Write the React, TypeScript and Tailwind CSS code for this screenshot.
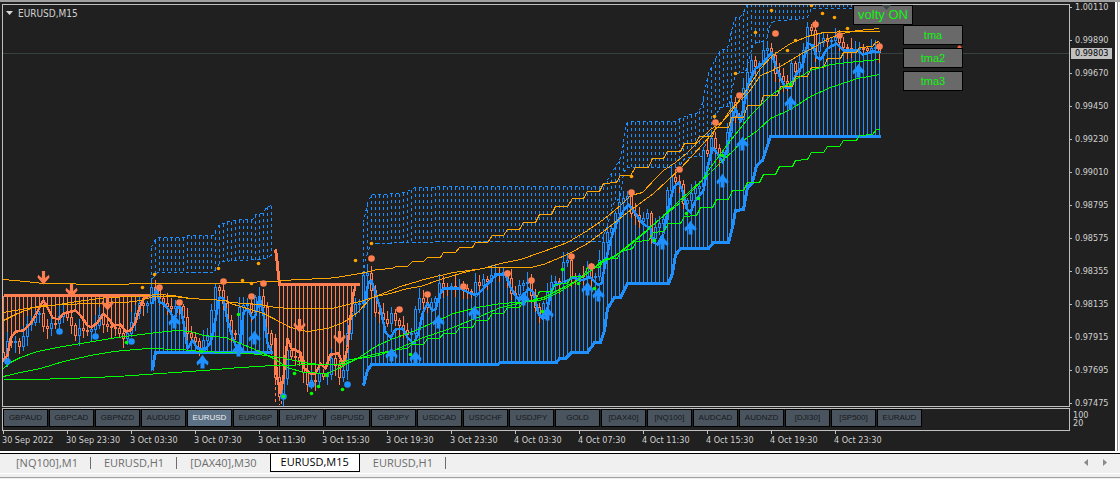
import { useState } from 'react';
import clsx from 'clsx';

type Point = [number, number];

const BLUE = '#1e90ff';
const CORAL = '#ff7f50';
const ORANGE = '#ffa500';
const LIME = '#00ff00';
const BACKGROUND = '#202020';

const parse = (text: string): Point[] =>
  text.trim().split(/\s+/).map((pair) => pair.split(',').map(Number) as Point);

const yAt = (points: Point[], x: number) => {
  if (x <= points[0][0]) return points[0][1];
  for (let i = 1; i < points.length; i++) {
    const [x0, y0] = points[i - 1];
    const [x1, y1] = points[i];
    if (x <= x1) return Math.round(y0 + ((y1 - y0) * (x - x0)) / (x1 - x0 || 1));
  }
  return points[points.length - 1][1];
};

const barsBetween = (from: number, to: number) => {
  const xs: number[] = [];
  for (let x = from; x <= to; x += 4) xs.push(x);
  return xs;
};

const SYMBOLS = [
  'GBPAUD', 'GBPCAD', 'GBPNZD', 'AUDUSD', 'EURUSD', 'EURGBP', 'EURJPY', 'GBPUSD', 'GBPJPY', 'USDCAD',
  'USDCHF', 'USDJPY', 'GOLD', '[DAX40]', '[NQ100]', 'AUDCAD', 'AUDNZD', '[DJI30]', '[SP500]', 'EURAUD',
];

const PRICES = [
  '1.00110', '0.99890', '0.99670', '0.99450', '0.99230', '0.99010', '0.98795',
  '0.98575', '0.98355', '0.98135', '0.97915', '0.97695', '0.97475',
];

const TIMES = [
  '30 Sep 2022', '30 Sep 23:30', '3 Oct 03:30', '3 Oct 07:30', '3 Oct 11:30', '3 Oct 15:30', '3 Oct 19:30',
  '3 Oct 23:30', '4 Oct 03:30', '4 Oct 07:30', '4 Oct 11:30', '4 Oct 15:30', '4 Oct 19:30', '4 Oct 23:30',
];

const TABS = ['[NQ100],M1', 'EURUSD,H1', '[DAX40],M30', 'EURUSD,M15', 'EURUSD,H1'];

// Trend zones: base line, fast average and the hatching between them
const ZONES = [
  {
    color: CORAL,
    from: 3,
    to: 147,
    base: parse('3,295 149,295'),
    average: parse(
      '3,360 7,355 10,338 15,331 23,330 30,323 35,315 41,303 43,300 47,307 52,317 58,319 63,313 75,310 80,315 87,325 91,327 97,322 103,313 107,317 113,325 120,324 125,331 130,330 135,322 138,310 143,298 148,295'
    ),
  },
  {
    color: BLUE,
    from: 151,
    to: 271,
    base: parse('152,370 153,362 155,352 272,352'),
    average: parse(
      '152,303 156,288 159,302 163,303 170,312 174,320 177,307 180,307 183,322 187,348 192,340 197,348 205,349 210,342 213,330 216,313 219,297 223,298 227,320 232,337 237,349 240,342 243,312 247,308 252,318 255,315 259,297 263,313 267,343 271,350'
    ),
  },
  {
    color: CORAL,
    from: 279,
    to: 355,
    base: parse('275,249 276,256 279,284 359,284'),
    average: parse(
      '275,345 276,373 280,393 283,377 287,338 291,348 300,352 303,367 310,373 315,373 320,363 325,368 330,354 338,353 343,365 347,347 350,317 353,293 355,286'
    ),
  },
  {
    color: BLUE,
    from: 363,
    to: 879,
    base: parse(
      '363,385 367,370 371,364 497,364 500,362 556,362 559,358 565,358 571,352 587,352 594,342 600,342 604,330 607,308 614,297 620,297 627,283 668,283 672,273 675,255 680,248 708,248 713,242 728,242 732,227 735,210 743,209 747,187 752,182 756,165 762,160 770,136 880,136'
    ),
    average: parse(
      '363,307 368,282 371,280 375,293 380,308 385,332 390,337 395,329 402,328 407,337 413,343 418,333 422,313 427,303 432,310 435,309 439,295 443,288 460,288 468,292 476,295 483,288 492,278 497,274 505,274 510,287 517,298 523,295 528,288 533,292 538,313 542,318 545,317 548,303 553,285 563,282 573,277 580,280 590,277 597,284 601,283 605,262 610,240 615,225 623,210 628,204 635,213 642,223 650,228 653,242 657,244 663,233 668,207 673,187 678,182 682,190 686,208 690,212 695,200 703,190 707,167 712,147 717,153 722,162 727,148 731,123 735,108 740,121 743,107 748,83 755,68 762,63 771,52 775,65 780,78 785,87 790,87 795,75 802,65 807,43 813,45 816,57 820,59 827,48 836,43 843,50 857,50 862,54 873,51 880,52'
    ),
  },
];

// Dashed volatility bands above the blue zones
const BANDS = [
  {
    from: 151,
    to: 271,
    top: parse(
      '151,247 153,242 157,237 183,237 187,235 214,235 215,230 220,223 223,223 228,221 240,219 252,219 255,214 262,213 267,206 272,205'
    ),
    bottom: parse('151,284 152,278 157,272 213,272 216,268 220,261 237,260 258,259 266,258 272,254'),
  },
  {
    from: 363,
    to: 851,
    top: parse(
      '363,222 367,203 371,194 385,194 404,192 408,190 415,187 432,187 435,186 603,186 608,178 617,163 620,158 623,143 625,125 628,121 675,121 678,119 687,115 698,112 702,103 705,87 708,73 715,58 720,50 727,48 731,30 735,17 742,15 745,7 748,3 851,3'
    ),
    bottom: parse(
      '363,285 364,262 368,250 371,243 415,242 432,242 435,241 601,241 607,225 613,203 620,197 623,172 627,167 678,167 685,157 702,156 705,143 710,130 715,115 720,107 728,106 732,87 735,74 740,72 745,72 748,60 753,43 762,41 767,37 770,23 775,20 800,19 807,17 811,8 853,8'
    ),
  },
];

const CURVES = [
  {
    color: ORANGE,
    points:
      '3,279 25,281 43,283 107,284 150,283 210,283 240,282 273,281 297,279 327,278 342,276 360,273 377,269 392,268 395,266 407,266 412,261 423,261 427,257 440,257 443,252 455,252 459,247 472,247 475,242 487,242 492,235 503,235 507,229 519,229 523,222 535,222 539,214 551,214 555,206 567,206 572,198 583,198 587,191 599,191 603,183 616,182 620,175 630,175 635,167 648,167 652,158 663,158 667,151 680,151 684,143 695,143 699,136 712,136 715,127 728,127 731,117 743,117 747,105 760,105 763,95 777,95 780,86 792,86 795,76 807,76 811,67 823,67 827,58 840,58 843,52 856,52 859,47 872,46 875,42 879,41',
  },
  {
    color: ORANGE,
    points:
      '3,312 33,307 43,305 67,304 87,303 125,302 140,300 153,296 173,296 190,298 207,299 225,300 230,302 260,304 268,306 287,308 332,308 343,305 360,301 375,296 390,293 407,288 420,286 443,278 467,271 487,267 530,267 543,264 567,254 587,243 603,231 627,212 653,193 680,168 703,143 710,135 730,112 747,88 760,68 772,55 790,43 807,36 823,32 850,31 879,31',
  },
  {
    color: ORANGE,
    points:
      '3,320 17,313 33,307 53,305 77,301 107,297 133,296 158,294 173,295 190,298 207,299 225,300 230,303 250,309 263,313 273,318 290,327 307,331 327,328 343,322 357,312 370,298 385,292 400,286 427,278 453,272 483,268 500,263 520,259 543,251 567,242 587,230 603,219 620,205 630,195 642,192 655,178 663,170 675,162 687,152 697,142 710,129 722,121 730,109 740,100 748,92 760,75 772,70 785,63 798,55 813,47 828,38 842,33 857,30 879,28',
  },
  {
    color: LIME,
    points:
      '3,368 10,362 20,357 37,351 57,347 87,342 117,337 140,334 157,332 177,330 190,331 203,335 225,337 240,343 257,350 273,358 287,367 303,372 327,373 340,367 357,358 377,345 393,338 407,333 417,329 433,322 453,313 477,307 500,303 533,301 543,299 560,291 577,280 590,270 603,259 613,257 620,251 640,235 660,218 680,202 700,182 710,167 730,140 750,115 770,95 790,82 810,70 830,64 857,61 879,59',
  },
  {
    color: LIME,
    points:
      '3,376 20,372 40,368 63,361 90,355 113,351 147,348 180,349 200,351 227,352 250,353 273,356 280,357 303,362 320,364 337,364 350,359 373,356 393,350 407,344 423,337 450,328 477,317 500,307 523,302 543,297 563,287 580,278 600,263 620,252 640,236 660,218 690,190 710,172 722,160 733,150 740,142 757,130 770,118 790,109 810,96 830,87 857,78 879,74',
  },
  {
    color: LIME,
    points:
      '3,379 33,379 67,378 117,376 160,373 203,370 240,367 273,365 320,364 343,364 360,357 377,353 397,349 407,348 411,344 423,344 427,338 439,338 443,333 455,333 459,327 472,327 476,320 487,320 492,313 503,313 507,307 519,307 523,300 535,300 539,291 551,291 555,284 567,283 571,276 583,276 587,267 599,267 603,259 617,258 620,251 632,248 636,241 648,240 653,232 663,231 668,223 680,223 684,216 696,215 700,207 712,207 716,199 728,199 732,190 743,190 747,182 759,182 763,174 775,174 779,166 792,166 795,160 807,159 811,152 823,152 827,146 839,146 843,140 856,140 859,135 872,134 876,129 879,129',
  },
];

// Close of every bar as a height on the plot, one bar each four pixels
const CLOSES = [
  358, 341, 342, 341, 346, 336, 324, 322, 314, 313, 326, 328, 323, 323, 316, 313, 317, 325, 335, 328,
  330, 331, 329, 325, 315, 324, 326, 327, 328, 333, 338, 333, 322, 313, 303, 305, 303, 287, 290, 298,
  303, 306, 308, 306, 306, 317, 333, 337, 341, 347, 340, 336, 310, 287, 290, 303, 320, 333, 334, 307,
  305, 304, 312, 297, 296, 307, 333, 344, 377, 396, 378, 350, 356, 357, 360, 372, 384, 380, 381, 373,
  376, 374, 358, 365, 377, 370, 333, 313, 304, 303, 275, 273, 290, 312, 313, 319, 323, 313, 320, 325,
  330, 334, 333, 309, 298, 302, 307, 302, 298, 283, 288, 288, 286, 288, 287, 288, 291, 293, 282, 285,
  279, 281, 275, 273, 274, 272, 278, 293, 294, 285, 283, 282, 295, 307, 313, 303, 292, 282, 281, 283,
  262, 260, 277, 277, 275, 276, 268, 277, 276, 260, 242, 232, 228, 213, 202, 198, 196, 213, 215, 221,
  218, 213, 238, 227, 223, 219, 190, 177, 181, 184, 203, 200, 193, 188, 186, 150, 153, 138, 148, 156,
  152, 132, 102, 116, 119, 88, 72, 60, 66, 63, 50, 48, 55, 73, 76, 81, 83, 63, 71, 62,
  50, 27, 30, 51, 42, 38, 41, 40, 37, 42, 47, 48, 50, 49, 48, 48, 50, 48, 47, 52,
];

const CORAL_BALLS = parse(
  '159,287 179,302 223,281 251,296 263,283 371,258 399,309 427,294 463,286 507,273 531,280 571,256 591,266 631,192 679,169 715,122 739,95 775,33 815,24 839,35 879,46'
);
const BLUE_BALLS = parse('7,361 59,331 95,336 131,341 283,396 311,384 347,384');
const LIME_DOTS = parse(
  '126,342 201,351 238,314 283,396 294,373 311,393 318,386 326,375 342,389 410,354 542,311 562,269 578,283 594,288 654,240 686,213 698,198 722,155 790,84'
);
const ORANGE_DOTS = parse(
  '142,287 154,274 218,268 242,280 251,283 258,263 355,260 371,243 631,176 714,116 735,73 755,32 771,10 787,50 795,40 811,5 822,13 834,17 847,28'
);
const UP_ARROWS = parse(
  '174,321 202,361 238,349 254,337 391,354 415,357 438,321 474,312 523,298 547,313 587,288 598,294 662,242 690,227 722,180 742,143 790,102 858,70'
);
const DOWN_ARROWS = parse('43,277 71,290 107,303 299,325 339,337');

const toPoints = (points: Point[]) => points.map((p) => p.join(',')).join(' ');

const Candles = () => (
  <g>
    {CLOSES.map((close, i) => {
      const x = 3 + i * 4;
      const open = i === 0 ? close - 6 : CLOSES[i - 1];
      const color = close < open ? BLUE : CORAL;
      const top = Math.min(open, close);
      const height = Math.max(Math.abs(close - open), 1);
      const up = 3 + ((i * 7) % 9);
      const down = 3 + ((i * 5) % 8);
      return (
        <g key={i} stroke={color} fill={BACKGROUND}>
          <path d={`M${x} ${top - up}V${top + height + down}`} />
          <rect x={x - 1} y={top} width={2} height={height} />
        </g>
      );
    })}
  </g>
);

const Plot = () => (
  <svg className="absolute inset-0 h-full w-full" role="img" aria-label="EURUSD price chart">
    <g transform="translate(-2.5 -4.5)" fill="none" shapeRendering="crispEdges">
      <path d="M0 53H4000" stroke="#364242" />

      {BANDS.map((band) => (
        <g key={band.from} stroke={BLUE} strokeDasharray="3 3">
          {barsBetween(band.from, band.to).map((x) => (
            <path key={x} d={`M${x} ${yAt(band.top, x)}V${yAt(band.bottom, x)}`} />
          ))}
          <polyline points={toPoints(band.top)} />
          <polyline points={toPoints(band.bottom)} />
        </g>
      ))}

      {ZONES.map((zone) => (
        <g key={zone.from} stroke={zone.color}>
          {barsBetween(zone.from, zone.to).map((x) => (
            <path key={x} d={`M${x} ${yAt(zone.base, x)}V${yAt(zone.average, x)}`} />
          ))}
        </g>
      ))}
      <path d="M275 380V404M279 385V404M281 400V404" stroke={CORAL} strokeDasharray="3 3" />

      <Candles />

      {ZONES.map((zone) => (
        <g key={zone.from} stroke={zone.color} strokeLinejoin="round">
          <polyline points={toPoints(zone.average)} strokeWidth={2.5} />
          <polyline points={toPoints(zone.base)} strokeWidth={3} />
        </g>
      ))}
      <path d="M275 337V373" stroke={CORAL} strokeWidth={3} />

      {CURVES.map((curve, i) => (
        <polyline key={i} points={curve.points} stroke={curve.color} />
      ))}
    </g>

    <g transform="translate(-2.5 -4.5)">
      {UP_ARROWS.map(([x, y]) => (
        <path
          key={x}
          transform={`translate(${x} ${y})`}
          d="M0 -6.8L3 -2.6L6 .6L5.4 4L2 1.6V7H-2V1.6L-5.4 4L-6 .6L-3 -2.6Z"
          fill={BLUE}
        />
      ))}
      {DOWN_ARROWS.map(([x, y]) => (
        <path
          key={x}
          transform={`translate(${x} ${y})`}
          d="M0 7L3 3.400L6 0L5.400 -2.800L1.600 .4V-6.500H-1.600V.4L-5.400 -2.800L-6 0L-3 3.400Z"
          fill={CORAL}
        />
      ))}
      {CORAL_BALLS.map(([x, y]) => (
        <circle key={x} cx={x} cy={y} r={3.3} fill={CORAL} />
      ))}
      {BLUE_BALLS.map(([x, y]) => (
        <circle key={x} cx={x} cy={y} r={3.3} fill={BLUE} />
      ))}
      {ORANGE_DOTS.map(([x, y]) => (
        <circle key={x} cx={x} cy={y} r={1.8} fill={ORANGE} />
      ))}
      {LIME_DOTS.map(([x, y]) => (
        <circle key={x} cx={x} cy={y} r={1.8} fill={LIME} />
      ))}
      <path d="M957 46h1v-1h2v1h1v3h-4z" fill="#ff6347" />
    </g>
  </svg>
);

const ToggleButton = ({ label }: { label: string }) => (
  <button className="flex h-5 w-[60px] items-center justify-center border border-black bg-[#696969] text-[#12f312]">
    {label}
  </button>
);

export default function App() {
  const [symbol, setSymbol] = useState('EURUSD');
  const [tab, setTab] = useState(3);

  return (
    <div className="flex flex-col bg-[#f0f0f0] font-['Liberation_Sans',sans-serif]">
      <div className="h-[2px] bg-[#a0a0a0]" />

      <div className="flex">
        <main className="min-w-0 flex-1 bg-[#202020] pt-[2px] pl-[2px] font-['DejaVu_Sans_Condensed','DejaVu_Sans',sans-serif] text-[9px] text-[#d0d0d0]">
          <div className="flex">
            <div className="relative h-[403px] flex-1 overflow-hidden border border-[#c0c0c0]">
              <Plot />
              <div className="absolute top-0 left-[3px] flex h-4 items-center gap-[5px] text-[10px]">
                <svg width="7" height="4" aria-hidden="true">
                  <path d="M0 0h7L3.5 4z" fill="#d8d8d8" />
                </svg>
                EURUSD,M15
              </div>
              <div className="absolute top-0 left-[850px] font-['Liberation_Sans',sans-serif] text-[13px]">
                <ToggleButton label="volty ON" />
                <svg className="absolute top-0 left-[29px]" width="9" height="5" aria-hidden="true">
                  <path d="M0 0h9L4.5 5z" fill="#3c4848" />
                </svg>
              </div>
              <div className="absolute top-5 left-[900px] flex flex-col gap-[3px] font-['Liberation_Sans',sans-serif] text-[11px]">
                <ToggleButton label="tma" />
                <ToggleButton label="tma2" />
                <ToggleButton label="tma3" />
              </div>
            </div>

            <div className="relative h-[403px] w-[45px]">
              <ul className="-mt-[13px]">
                {PRICES.map((price) => (
                  <li key={price} className="flex h-[33px] items-center gap-[3px]">
                    <span className="h-px w-[2px] bg-[#c0c0c0]" />
                    {price}
                  </li>
                ))}
              </ul>
              <div className="absolute top-11 left-px flex h-[11px] w-[41px] items-center bg-[#c0c0c0] pl-1 text-black">
                0.99803
              </div>
            </div>
          </div>

          <div className="mt-px flex">
            <div className="flex h-[23px] flex-1 gap-px overflow-hidden border border-[#c0c0c0] font-['Liberation_Sans',sans-serif] text-[8px]">
              {SYMBOLS.map((name) => (
                <button
                  key={name}
                  onClick={() => setSymbol(name)}
                  className={clsx(
                    'h-[18px] w-[45px] shrink-0 border border-black',
                    symbol === name ? 'bg-[#5d7186] text-[#f0f0f0]' : 'bg-[#4a545e] text-[#16191c]'
                  )}
                >
                  {name}
                </button>
              ))}
            </div>
            <div className="flex w-[45px] flex-col pt-[3px] pl-[3px] leading-[8px]">
              <span>100</span>
              <span>20</span>
            </div>
          </div>

          <ol className="flex h-5 overflow-hidden">
            {TIMES.map((time) => (
              <li key={time} className="w-16 shrink-0 whitespace-nowrap">
                <div className="ml-px h-[3px] w-px bg-[#c0c0c0]" />
                <div className="leading-[13px]">{time}</div>
              </li>
            ))}
          </ol>
        </main>
        <div className="w-[5px] border-r border-[#f0f0f0] bg-white">
          <div className="ml-[2px] h-full w-px bg-[#8a8a8a]" />
        </div>
      </div>

      <div className="h-[2px] bg-white" />
      <nav className="flex h-5 items-start border-t border-black font-['Open_Sans',sans-serif] text-[11px] text-[#6d6d6d]">
        <div className="flex h-[18px] pl-[3px]">
          {TABS.map((name, i) => (
            <button
              key={i}
              onClick={() => setTab(i)}
              className={clsx(
                'relative flex items-center',
                tab === i
                  ? 'border-r border-b border-l border-black bg-white px-[10px] text-black'
                  : 'px-[13px]'
              )}
            >
              {name}
              {tab !== i && tab !== i + 1 && (
                <span className="absolute top-[3px] right-0 h-3 w-px bg-[#6d6d6d]" />
              )}
            </button>
          ))}
        </div>
        <div className="ml-auto flex h-4 items-center gap-[15px] pr-[13px]">
          <button aria-label="Scroll left">
            <svg width="4" height="7">
              <path d="M4 0v7L0 3.5z" fill="#8a8a8a" />
            </svg>
          </button>
          <button aria-label="Scroll right">
            <svg width="4" height="7">
              <path d="M0 0v7l4-3.5z" fill="#8a8a8a" />
            </svg>
          </button>
        </div>
      </nav>
      <div className="h-px bg-white" />
      <div className="mt-[3px] h-[2px] border-t border-[#a0a0a0]" />
    </div>
  );
}
